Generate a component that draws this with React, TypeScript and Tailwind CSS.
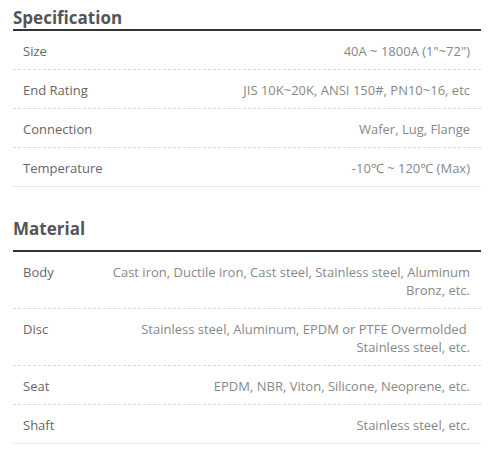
import React from "react";

type Row = { label: string; value: React.ReactNode; last?: boolean };

const spec: Row[] = [
  { label: "Size", value: "40A ~ 1800A (1\"~72\")" },
  { label: "End Rating", value: "JIS 10K~20K, ANSI 150#, PN10~16, etc" },
  { label: "Connection", value: "Wafer, Lug, Flange" },
  { label: "Temperature", value: "-10℃ ~ 120℃ (Max)", last: true },
];

const material: Row[] = [
  {
    label: "Body",
    value: (
      <>
        Cast iron, Ductile iron, Cast steel, Stainless steel, Aluminum
        <br />
        Bronz, etc.
      </>
    ),
  },
  {
    label: "Disc",
    value: (
      <>
        Stainless steel, Aluminum, EPDM or PTFE Overmolded{"\u00a0"}
        <br />
        Stainless steel, etc.
      </>
    ),
  },
  { label: "Seat", value: "EPDM, NBR, Viton, Silicone, Neoprene, etc." },
  { label: "Shaft", value: "Stainless steel, etc.", last: true },
];

function Rows({ rows }: { rows: Row[] }) {
  return (
    <div>
      {rows.map((r) => (
        <div
          key={r.label}
          className={
            "flex justify-between pl-[10px] pr-[11px] pt-[11px] pb-[9px] text-[13px] leading-[18px] " +
            (r.last ? "border-b border-solid border-[#e6e6e6]" : "border-b border-dashed border-[#d9d9d9]")
          }
        >
          <div className="text-[#666666] whitespace-nowrap">{r.label}</div>
          <div className="text-right text-[#888888] whitespace-nowrap">{r.value}</div>
        </div>
      ))}
    </div>
  );
}

export default function App() {
  return (
    <div
      className="w-[494px] h-[459px] bg-white px-[13px] overflow-hidden"
      style={{ fontFamily: '"Open Sans", "Noto Sans", sans-serif' }}
    >
      <div className="pt-[8px] pb-[1px] border-b-2 border-[#333333]">
        <h2 className="text-[17px] leading-[20px] font-bold text-[#555555]">Specification</h2>
      </div>
      <Rows rows={spec} />
      <div className="mt-[32px] pb-[11px] border-b-2 border-[#333333]">
        <h2 className="text-[17px] leading-[20px] font-bold text-[#555555]">Material</h2>
      </div>
      <Rows rows={material} />
    </div>
  );
}
